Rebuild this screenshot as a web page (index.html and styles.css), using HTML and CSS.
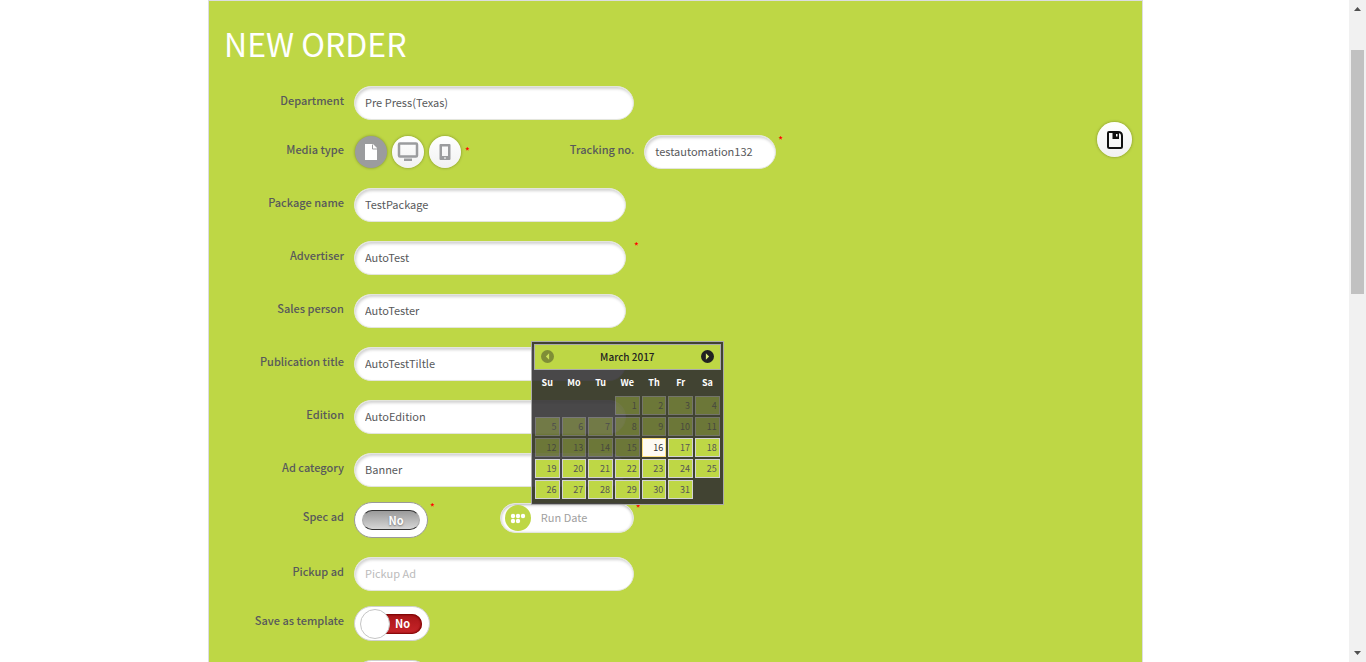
FILE: index.html
```html
<!DOCTYPE html>
<html lang="en">
<head>
<meta charset="utf-8">
<title>New order</title>
<link rel="stylesheet" href="styles.css">
</head>
<body>
<div class="viewport">
<main class="page">
<form class="panel">
  <h1 class="title">NEW ORDER</h1>
  <button type="button" class="round save" aria-label="Save">
    <svg width="20" height="20" viewBox="0 0 20 20"><path d="M4 2h9q4 0 4 4v10.500q0 1.500-1.500 1.500h-11Q3 18 3 16.500V3q0-1 1-1z" fill="none" stroke="#111" stroke-width="2"/><path d="M7.500 2h6.500v7H7.500z" fill="#111"/><path d="M11 4h1.500v2.500H11z" fill="#fff"/></svg>
  </button>

  <div class="row tight">
    <label class="label" for="dept">Department</label>
    <input class="text wide" id="dept" value="Pre Press(Texas)">
  </div>
  <div class="row">
    <span class="label" id="media">Media type</span>
    <div class="media" role="group" aria-labelledby="media">
      <button type="button" class="round type active" aria-label="Print"><svg width="32" height="32" viewBox="0 0 32 32"><path d="M10 8h8l4 4v12H10z" fill="#fff"/><path d="M17.500 8.500V13H22" fill="none" stroke="#9b9c9e" stroke-width="1"/></svg></button>
      <button type="button" class="round type" aria-label="Web"><svg width="32" height="32" viewBox="0 0 32 32"><rect x="7" y="7.500" width="18" height="13" rx="1" fill="none" stroke="#9b9c9e" stroke-width="2.500"/><path d="M12 22.500h8V25h-8z" fill="#9b9c9e"/></svg></button>
      <button type="button" class="round type" aria-label="Mobile"><svg width="32" height="32" viewBox="0 0 32 32"><path d="M11.500 8h9q1 0 1 1v14q0 1-1 1h-9q-1 0-1-1V9q0-1 1-1zM13 10.500v9.500h6v-9.500z" fill="#9b9c9e" fill-rule="evenodd"/><path d="M15 21.500h2v1h-2z" fill="#fff"/></svg></button>
    </div>
    <span class="star mid">*</span>
    <label class="label second" for="track">Tracking no.</label>
    <input class="text short" id="track" value="testautomation132">
    <span class="star">*</span>
  </div>
  <div class="row">
    <label class="label" for="pkg">Package name</label>
    <input class="text" id="pkg" value="TestPackage">
  </div>
  <div class="row">
    <label class="label" for="adv">Advertiser</label>
    <input class="text" id="adv" value="AutoTest">
    <span class="star far">*</span>
  </div>
  <div class="row">
    <label class="label" for="sales">Sales person</label>
    <input class="text" id="sales" value="AutoTester">
  </div>
  <div class="row">
    <label class="label" for="pub">Publication title</label>
    <input class="text" id="pub" value="AutoTestTiltle">
  </div>
  <div class="row">
    <label class="label" for="edition">Edition</label>
    <input class="text" id="edition" value="AutoEdition">
  </div>
  <div class="row tight">
    <label class="label" for="cat">Ad category</label>
    <input class="text" id="cat" value="Banner">
  </div>
  <div class="row">
    <span class="label" id="spec">Spec ad</span>
    <button type="button" class="switch gray" role="switch" aria-checked="false" aria-labelledby="spec"><span class="track">No</span></button>
    <span class="star">*</span>
    <div class="date">
      <svg class="date-icon" width="26" height="26" viewBox="0 0 26 26"><circle cx="13" cy="13" r="13" fill="#bed745"/><g fill="#fff"><circle cx="8" cy="11" r="2.200"/><circle cx="13" cy="11" r="2.200"/><circle cx="18" cy="11" r="2.200"/><circle cx="8" cy="16" r="2.200"/><circle cx="13" cy="16" r="2.200"/></g></svg>
      <input class="date-input" aria-label="Run Date" placeholder="Run Date">
      <span class="star date-star">*</span>
      <div class="picker">
        <div class="picker-head">
          <button type="button" class="arrow dim" aria-label="Previous month"><svg width="13" height="13" viewBox="0 0 12 12"><circle cx="6" cy="6" r="6" fill="#222"/><path d="M7.500 3v6l-3-3z" fill="#dff07a"/></svg></button>
          <span>March 2017</span>
          <button type="button" class="arrow" aria-label="Next month"><svg width="13" height="13" viewBox="0 0 12 12"><circle cx="6" cy="6" r="6" fill="#222"/><path d="M4.500 3v6l3-3z" fill="#dff07a"/></svg></button>
        </div>
        <table class="days">
          <thead><tr><th>Su</th><th>Mo</th><th>Tu</th><th>We</th><th>Th</th><th>Fr</th><th>Sa</th></tr></thead>
          <tbody>
            <tr><td></td><td></td><td></td><td><span class="day off">1</span></td><td><span class="day off">2</span></td><td><span class="day off">3</span></td><td><span class="day off">4</span></td></tr>
            <tr><td><span class="day off">5</span></td><td><span class="day off">6</span></td><td><span class="day off">7</span></td><td><span class="day off">8</span></td><td><span class="day off">9</span></td><td><span class="day off">10</span></td><td><span class="day off">11</span></td></tr>
            <tr><td><span class="day off">12</span></td><td><span class="day off">13</span></td><td><span class="day off">14</span></td><td><span class="day off">15</span></td><td><a href="#" class="day today">16</a></td><td><a href="#" class="day">17</a></td><td><a href="#" class="day">18</a></td></tr>
            <tr><td><a href="#" class="day">19</a></td><td><a href="#" class="day">20</a></td><td><a href="#" class="day">21</a></td><td><a href="#" class="day">22</a></td><td><a href="#" class="day">23</a></td><td><a href="#" class="day">24</a></td><td><a href="#" class="day">25</a></td></tr>
            <tr><td><a href="#" class="day">26</a></td><td><a href="#" class="day">27</a></td><td><a href="#" class="day">28</a></td><td><a href="#" class="day">29</a></td><td><a href="#" class="day">30</a></td><td><a href="#" class="day">31</a></td><td></td></tr>
          </tbody>
        </table>
      </div>
    </div>
  </div>
  <div class="row tight">
    <label class="label" for="pickup">Pickup ad</label>
    <input class="text wide" id="pickup" placeholder="Pickup Ad">
  </div>
  <div class="row">
    <span class="label" id="tpl">Save as template</span>
    <button type="button" class="switch red" role="switch" aria-checked="false" aria-labelledby="tpl"><span class="track">No</span><span class="knob"></span></button>
  </div>
  <div class="row">
    <span class="label"></span>
    <button type="button" class="switch red" role="switch" aria-checked="false" aria-label="Option"></button>
  </div>
</form>
</main>
<div class="scrollbar" aria-hidden="true">
  <svg width="17" height="17" viewBox="0 0 17 17"><path d="M5 11h7L8.500 7z" fill="#505050"/></svg>
  <div class="rail"><div class="thumb"></div></div>
  <svg width="17" height="17" viewBox="0 0 17 17"><path d="M5 6h7l-3.500 4z" fill="#505050"/></svg>
</div>
</div>
</body>
</html>
```
FILE: styles.css
```css
* { box-sizing: border-box; }
body {
  margin: 0;
  background: #fff;
  color: #58595b;
  font: 11px/18px "Noto Sans CJK SC", "Open Sans", sans-serif;
}
button, input { font: inherit; color: inherit; }
button { padding: 0; border: 0; background: none; cursor: pointer; }
svg { display: block; }

.viewport { display: flex; height: 100vh; overflow: hidden; }
.page { flex: 1; min-width: 0; padding-left: 2px; }
.panel {
  position: relative;
  max-width: 935px;
  margin: 0 auto;
  padding: 22px 15px 0 0;
  border: 1px solid #dcdde0;
  background: #bed745;
}
.title {
  margin: 0 0 23px 15px;
  color: #fff;
  font-size: 32px;
  font-weight: 400;
  line-height: 40px;
}

.row { display: flex; align-items: flex-start; margin-bottom: 19px; }
.row.tight { margin-bottom: 15px; }
.label {
  flex: none;
  width: 135px;
  margin: 5px 10px 0 0;
  text-align: right;
  font-weight: 500;
}
.label.second { width: auto; margin-left: 100px; }
.text {
  width: 272px;
  height: 34px;
  padding: 0 10px 2px;
  border: 1px solid #e3e5dc;
  border-radius: 17px;
  background: #fff;
  box-shadow: inset 1px 2px 3px rgba(0, 0, 0, .18);
  outline: 0;
}
.text.wide { width: 280px; }
.text.short { width: 132px; }
::placeholder { color: #a0a0a0; opacity: 1; }
#pickup::placeholder { color: #bbb; }

.star { margin-left: 2px; color: #f00; font-size: 10px; font-weight: 500; line-height: 10px; }
.star.mid { margin: 11px 0 0 4px; }
.star.far { margin-left: 8px; }

.round {
  display: flex;
  align-items: center;
  justify-content: center;
  border-radius: 50%;
  background: linear-gradient(#fff, #f1f1f1);
  box-shadow: 0 0 3px rgba(0, 0, 0, .35);
}
.save { position: absolute; top: 121px; right: 10px; width: 35px; height: 35px; }
.media { display: flex; gap: 5px; padding: 1px 0 0 1px; }
.type { width: 32px; height: 32px; }
.type.active { background: #9b9c9e; }

.switch {
  position: relative;
  width: 76px;
  height: 35px;
  padding: 7px;
  border: 1px solid #d0d0d0;
  border-radius: 18px;
  background: #fff;
  color: #fff;
  font-weight: 700;
}
.track { display: block; height: 20px; border-radius: 10px; line-height: 19px; }
.gray { width: 74px; height: 36px; border-color: #999; }
.gray .track {
  padding-left: 10px;
  border: 1px solid #aaa;
  border-top-color: #333;
  border-bottom-color: #333;
  background: linear-gradient(#9a9a9a, #d6d6d6);
  line-height: 18px;
  text-shadow: 0 1px 2px #777;
}
.red .track {
  padding-left: 21px;
  background: linear-gradient(#a81518, #c8252a);
  box-shadow: inset 0 0 2px 1px #700;
}
.knob {
  position: absolute;
  top: 2px;
  left: 5px;
  width: 30px;
  height: 30px;
  border: 1px solid #c5c5c5;
  border-radius: 50%;
  background: #fff;
}

.date { position: relative; display: flex; margin: 1px 0 0 65px; }
.date-input {
  width: 134px;
  height: 30px;
  padding: 0 0 2px 40px;
  border: 1px solid #e3e5dc;
  border-radius: 15px;
  background: #fff;
  box-shadow: inset 0 1px 3px rgba(0, 0, 0, .3);
  outline: 0;
}
.date-icon { position: absolute; top: 2px; left: 5px; }
.picker {
  position: absolute;
  bottom: 28px;
  left: 31px;
  width: 193px;
  padding: 2px 2px 4px;
  border: 1px solid #aaa;
  background: rgba(48, 47, 48, .88);
}
.picker-head {
  display: flex;
  align-items: center;
  justify-content: space-between;
  height: 26px;
  padding: 0 6px 1px;
  border: 1px solid #aaa;
  background: #bed745;
  color: #222;
  font-size: 10px;
  font-weight: 500;
}
.arrow.dim { opacity: .4; }
.days { width: 100%; border-collapse: collapse; table-layout: fixed; }
.days th { height: 25px; padding: 0; color: #fff; font-size: 9px; line-height: 12px; }
.days td { height: 21px; padding: 1px; }
.day {
  display: block;
  height: 19px;
  padding-right: 2px;
  border: 1px solid #d3d3d3;
  background: #bed745;
  color: #555;
  font-size: 9px;
  line-height: 17px;
  text-align: right;
  text-decoration: none;
}
.day.off { opacity: .35; }
.day.today { border-color: #fcdf7e; background: #fdfaf3; color: #333; }

.scrollbar { display: flex; flex-direction: column; flex: none; width: 17px; background: #f1f1f1; }
.rail { flex: 1; padding: 33px 2px 0; }
.thumb { height: 41%; background: #c1c1c1; }
```
